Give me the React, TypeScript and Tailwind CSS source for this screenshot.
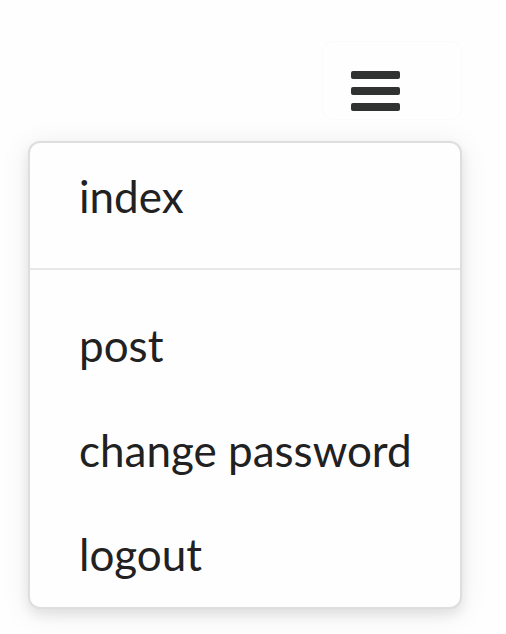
export default function App() {
  return (
    <div className="flex min-h-screen flex-col items-end bg-[#fefefe] pt-[41px] pr-[44px] pl-[28px] font-['Lato',sans-serif] text-[#212121]">
      <button
        type="button"
        aria-label="Menu"
        aria-expanded="true"
        className="flex h-[79px] w-[140px] items-start rounded-xl border border-[#fbfbfb] bg-[#fefefe] pt-7 pl-7 text-[#303131]"
      >
        <svg width="49" height="42" viewBox="0 0 49 42" fill="currentColor" aria-hidden="true">
          <rect y="1" width="49" height="8" rx="2" />
          <rect y="17" width="49" height="8" rx="2" />
          <rect y="33" width="49" height="8" rx="2" />
        </svg>
      </button>
      <nav className="mt-[21px] w-full rounded-xl border-2 border-[#dedede] bg-[#fefefe] text-[44px] leading-[50px] shadow-[0_6px_12px_rgba(0,0,0,0.08),0_4px_30px_rgba(0,0,0,0.08)]">
        <a href="#index" className="block px-[49px] pt-7 pb-[47px]">index</a>
        <hr className="border-t-2 border-[#e8e8e8]" />
        <a href="#post" className="block px-[49px] pt-[50px] pb-7">post</a>
        <a href="#password" className="block px-[49px] py-[27px] whitespace-nowrap">change password</a>
        <a href="#logout" className="block px-[49px] pt-[27px] pb-7">logout</a>
      </nav>
    </div>
  );
}
